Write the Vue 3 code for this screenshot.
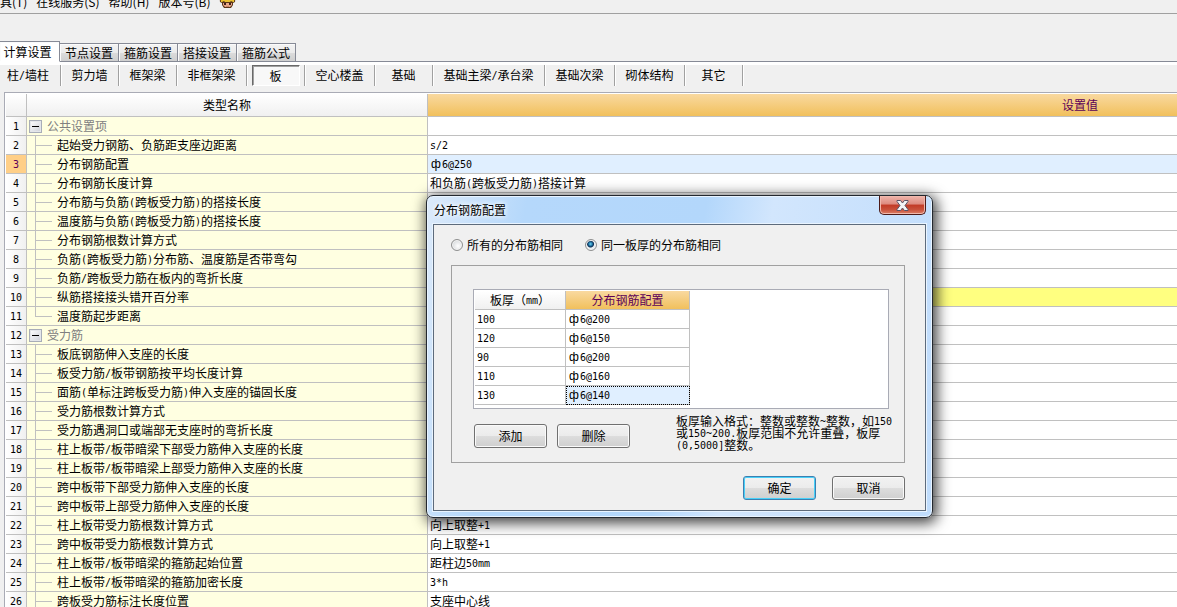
<script setup>
import { h } from 'vue'

const menus = ['具(T)', '在线服务(S)', '帮助(H)', '版本号(B)']
const tabs = ['计算设置', '节点设置', '箍筋设置', '搭接设置', '箍筋公式']
const parts = [
  { label: '柱/墙柱', size: 'w60' },
  { label: '剪力墙', size: 'w58' },
  { label: '框架梁', size: 'w58' },
  { label: '非框架梁', size: 'w70' },
  { label: '板', size: 'w58', active: true },
  { label: '空心楼盖', size: 'w70' },
  { label: '基础', size: 'w58' },
  { label: '基础主梁/承台梁', size: 'w112' },
  { label: '基础次梁', size: 'w70' },
  { label: '砌体结构', size: 'w70' },
  { label: '其它', size: 'w58' },
]

const rows = [
  { name: '公共设置项', group: true },
  { name: '起始受力钢筋、负筋距支座边距离', value: 's/2' },
  { name: '分布钢筋配置', value: 'ф6@250', selected: true },
  { name: '分布钢筋长度计算', value: '和负筋(跨板受力筋)搭接计算' },
  { name: '分布筋与负筋(跨板受力筋)的搭接长度' },
  { name: '温度筋与负筋(跨板受力筋)的搭接长度' },
  { name: '分布钢筋根数计算方式' },
  { name: '负筋(跨板受力筋)分布筋、温度筋是否带弯勾' },
  { name: '负筋/跨板受力筋在板内的弯折长度' },
  { name: '纵筋搭接接头错开百分率', changed: true },
  { name: '温度筋起步距离', last: true },
  { name: '受力筋', group: true },
  { name: '板底钢筋伸入支座的长度' },
  { name: '板受力筋/板带钢筋按平均长度计算' },
  { name: '面筋(单标注跨板受力筋)伸入支座的锚固长度' },
  { name: '受力筋根数计算方式' },
  { name: '受力筋遇洞口或端部无支座时的弯折长度' },
  { name: '柱上板带/板带暗梁下部受力筋伸入支座的长度' },
  { name: '柱上板带/板带暗梁上部受力筋伸入支座的长度' },
  { name: '跨中板带下部受力筋伸入支座的长度' },
  { name: '跨中板带上部受力筋伸入支座的长度' },
  { name: '柱上板带受力筋根数计算方式', value: '向上取整+1' },
  { name: '跨中板带受力筋根数计算方式', value: '向上取整+1' },
  { name: '柱上板带/板带暗梁的箍筋起始位置', value: '距柱边50mm' },
  { name: '柱上板带/板带暗梁的箍筋加密长度', value: '3*h' },
  { name: '跨板受力筋标注长度位置', value: '支座中心线' },
]

const bars = [
  ['100', 'ф6@200'],
  ['120', 'ф6@150'],
  ['90', 'ф6@200'],
  ['110', 'ф6@160'],
  ['130', 'ф6@140'],
]

// Sets half-width characters in a monospaced face, half an em of the Chinese text wide
const Mixed = (props) =>
  h(
    'span',
    { class: 'mixed' },
    (props.text.match(/ф|[\x21-\x7e]+|[^\x21-\x7eф]+/g) || []).map((run) => {
      if (run === 'ф') return h('span', { class: 'dia' }, run)
      return /[\x21-\x7e]/.test(run) ? h('span', { class: 'half' }, run) : run
    })
  )
Mixed.props = ['text']
</script>

<template>
  <div class="app">
    <nav class="menubar">
      <button v-for="m in menus" :key="m" type="button">{{ m }}</button>
      <svg class="face" viewBox="0 0 17 16" aria-hidden="true">
        <path d="M1 10C0 4 4 0 8.500 0S17 4 16 10l-2 1v2l-2 3H5l-2-3v-2z" fill="#5a3418" />
        <path d="M4 10h9v3l-2 2H6l-2-2z" fill="#e8a888" />
        <path d="M2 10C1 4 5 1 8.500 1S16 4 15 10l-1 0-2-1-1 1H6L5 9l-2 1z" fill="#e8c030" />
        <path d="M4 10h9v1H4z" fill="#5a3418" />
        <path d="M5 11h2v2H5zM10 11h2v2h-2z" fill="#40201c" />
        <path d="M7 14h3v1H7z" fill="#c88068" />
      </svg>
    </nav>

    <div class="tabs" role="tablist">
      <button v-for="(t, i) in tabs" :key="t" type="button" role="tab" :class="{ on: i === 0 }" :aria-selected="i === 0">{{ t }}</button>
      <span class="rest"></span>
    </div>

    <div class="parts">
      <div v-for="p in parts" :key="p.label" class="part" :class="p.size">
        <button type="button" :class="{ on: p.active }"><Mixed :text="p.label" /></button>
      </div>
    </div>

    <div class="sheet">
      <table class="grid">
        <colgroup><col class="c-num" /><col class="c-name" /><col class="c-val" /></colgroup>
        <thead>
          <tr><th></th><th>类型名称</th><th class="hot">设置值</th></tr>
        </thead>
        <tbody>
          <tr v-for="(r, i) in rows" :key="i" :class="{ selected: r.selected, changed: r.changed }">
            <td class="num"><span class="half">{{ i + 1 }}</span></td>
            <td class="name">
              <div class="cell" :class="{ group: r.group }">
                <button v-if="r.group" type="button" class="fold" aria-label="折叠"></button>
                <span v-else class="branch" :class="{ last: r.last }"></span>
                <Mixed :text="r.name" />
              </div>
            </td>
            <td class="value"><Mixed :text="r.value || ''" /></td>
          </tr>
        </tbody>
      </table>
    </div>

    <section class="dialog" role="dialog" aria-labelledby="dlg-title">
      <header>
        <h1 id="dlg-title">分布钢筋配置</h1>
        <button type="button" class="close" aria-label="关闭">
          <svg viewBox="0 0 13 11" aria-hidden="true">
            <path d="M1 .5h3.600L6.500 3 8.400.5H12v1L9 5.500l3 4v1H8.400L6.500 8l-1.900 2.500H1v-1l3-4-3-4z" fill="#f4f4f6" stroke="#5a5468" />
          </svg>
        </button>
      </header>
      <div class="client">
        <div class="choices">
          <label><input type="radio" name="scope" />所有的分布筋相同</label>
          <label><input type="radio" name="scope" checked />同一板厚的分布筋相同</label>
        </div>
        <div class="box">
          <div class="list">
            <table class="bars">
              <colgroup><col class="b-thick" /><col class="b-conf" /></colgroup>
              <thead>
                <tr><th><Mixed text="板厚（mm）" /></th><th class="hot">分布钢筋配置</th></tr>
              </thead>
              <tbody>
                <tr v-for="(b, i) in bars" :key="b[0]">
                  <td><Mixed :text="b[0]" /></td>
                  <td :class="{ focus: i === 4 }"><Mixed :text="b[1]" /></td>
                </tr>
              </tbody>
            </table>
          </div>
          <div class="below">
            <button type="button" class="btn">添加</button>
            <button type="button" class="btn">删除</button>
            <p>
              <Mixed text="板厚输入格式：整数或整数~整数，如150" /><br />
              <Mixed text="或150~200.板厚范围不允许重叠，板厚" /><br />
              <Mixed text="(0,5000]整数。" />
            </p>
          </div>
        </div>
        <div class="actions">
          <button type="button" class="btn primary">确定</button>
          <button type="button" class="btn">取消</button>
        </div>
      </div>
    </section>
  </div>
</template>

<style>
body {
  overflow: hidden;
}
.mixed {
  white-space: nowrap;
}
.half {
  font-family: "DejaVu Sans Mono", "Liberation Mono", monospace;
  font-size: 10px;
  line-height: 0;
  vertical-align: 1px;
}
.dia {
  display: inline-block;
  width: 12px;
  text-align: center;
  font-family: "Liberation Sans", Arial, sans-serif;
  font-size: 12px;
  line-height: 0;
  vertical-align: 1px;
}
</style>

<style scoped>
.app {
  position: relative;
  display: flex;
  flex-direction: column;
  height: 100vh;
  overflow: hidden;
  background: #f0f0f0;
  color: #000;
  font: 12px/18px "Noto Sans CJK SC", sans-serif;
}
button {
  margin: 0;
  padding: 0;
  border: 0;
  background: none;
  color: inherit;
  font: inherit;
}
table {
  table-layout: fixed;
  border-spacing: 0;
}
th,
td {
  box-sizing: border-box;
  padding: 0;
  border-right: 1px solid #c0c0c0;
  border-bottom: 1px solid #c0c0c0;
  font-weight: normal;
  white-space: nowrap;
}
th {
  background: linear-gradient(#fff, #f0f0f0);
}
th.hot {
  background: linear-gradient(#f9d9a0, #f1c05c);
  color: #5c0058;
}

.menubar {
  display: flex;
  flex: none;
  align-items: flex-end;
  gap: 9px;
  height: 13px;
  overflow: hidden;
  border-bottom: 1px solid #a0a0a0;
}
.menubar button {
  flex: none;
  padding-bottom: 2px;
}
.face {
  flex: none;
  width: 17px;
  height: 16px;
  margin-bottom: 5px;
}

.tabs {
  display: flex;
  flex: none;
  align-items: flex-end;
  margin-top: 27px;
}
.tabs button {
  box-sizing: border-box;
  flex: none;
  width: 59px;
  height: 19px;
  border: 1px solid #868a96;
  border-left: 0;
  background: linear-gradient(#f3f3f3, #ebebeb 50%, #dcdcdc 50%, #cfcfcf);
  box-shadow: inset 1px 1px #fbfbfb;
}
.tabs button.on {
  width: 60px;
  height: 21px;
  padding-right: 4px;
  border-bottom-color: #fff;
  background: #fff;
}
.tabs .rest {
  flex: 1;
  border-bottom: 1px solid #868a96;
}

.parts {
  display: flex;
  flex: none;
  height: 21px;
  border-top: 3px solid #fff;
}
.part {
  box-sizing: border-box;
  flex: none;
  display: flex;
  justify-content: center;
  border-right: 1px solid #a0a0a0;
  box-shadow: 1px 0 #fff;
}
.part button {
  padding-bottom: 2px;
}
.part button.on {
  width: 48px;
  padding: 0;
  border: 1px solid;
  border-color: #696969 #fff #fff #696969;
  background: #f8f8f8;
  box-shadow: inset 1px 1px #a0a0a0;
}
.w58 { width: 58px; }
.w60 { width: 61px; padding-right: 4px; }
.w70 { width: 70px; }
.w112 { width: 112px; }

.sheet {
  flex: 1;
  min-height: 0;
  margin: 6px 0 0 4px;
  padding: 1px 0 0 1px;
  overflow: hidden;
  border: solid #a9abb5;
  border-width: 1px 0 0 1px;
  background: #fff;
}
.grid {
  width: 1727px;
}
.c-num { width: 21px; }
.c-name { width: 401px; }
.grid th {
  height: 23px;
}
.grid td {
  height: 19px;
}
.num {
  background: linear-gradient(90deg, #fff, #f0f0f0);
  line-height: 16px;
  text-align: center;
}
.name {
  background: #ffffe1;
}
.cell {
  display: flex;
  align-items: center;
  gap: 5px;
  height: 18px;
  padding-left: 8px;
}
.cell.group {
  padding-left: 2px;
  color: #808080;
}
.branch {
  width: 17px;
  height: 18px;
  background:
    linear-gradient(#c0c0c0, #c0c0c0) 0 0 / 1px 100% no-repeat,
    linear-gradient(#c0c0c0, #c0c0c0) 0 9px / 100% 1px no-repeat;
}
.branch.last {
  background-size: 1px 9px, 100% 1px;
}
.fold {
  box-sizing: border-box;
  width: 13px;
  height: 13px;
  border: 1px solid #a8adb8;
  background:
    linear-gradient(#000, #000) center / 7px 1px no-repeat,
    linear-gradient(135deg, #fff, #cdd0d8);
  box-shadow: inset 0 0 0 1px #e4e6ea;
}
.value {
  padding-left: 2px;
  line-height: 16px;
}
.selected .num {
  background: #ffcf87;
  color: #5c0058;
}
.selected .value {
  background: #e0efff;
}
.changed .value {
  background: #ffff80;
}

.dialog {
  position: absolute;
  top: 195px;
  left: 426px;
  box-sizing: border-box;
  width: 507px;
  padding: 0 6px 6px;
  border: 1px solid #23282f;
  border-radius: 7px;
  background:
    linear-gradient(100deg, #dceafa 0, #b5d8fb 18%, #b3d7fb 50%, #d2e6fd 62%, #bfdcfc 100%);
  box-shadow: inset 0 0 0 1px #e9f4ff, 2px 3px 14px 2px rgba(0, 0, 0, 0.75);
}
.dialog header {
  display: flex;
  align-items: flex-start;
  justify-content: space-between;
  height: 28px;
}
.dialog h1 {
  margin: 0;
  padding: 5px 1px;
  font: inherit;
  text-shadow: 0 0 5px #fff, 0 0 5px #fff;
}
.close {
  box-sizing: border-box;
  display: flex;
  align-items: center;
  justify-content: center;
  width: 47px;
  height: 19px;
  border: 1px solid #4c1a18;
  border-top: 0;
  border-radius: 0 0 5px 5px;
  background: linear-gradient(#efb5ac, #dd8a7e 45%, #c23a26 50%, #c8503a 75%, #dc8068);
  box-shadow: inset 0 0 0 1px #f0b8ac;
}
.close svg {
  width: 13px;
  height: 11px;
}
.client {
  padding: 11px 20px 10px 17px;
  border: 1px solid #5d6b7c;
  background: #f0f0f0;
  box-shadow: 0 0 0 1px #e9f4ff;
}
.choices {
  display: flex;
  gap: 22px;
}
.choices label {
  display: flex;
  align-items: center;
  gap: 4px;
}
.choices input {
  appearance: none;
  box-sizing: border-box;
  width: 12px;
  height: 12px;
  margin: 0;
  border: 1px solid #8e8f8f;
  border-radius: 50%;
  background: radial-gradient(circle at 60% 60%, #fff, #c8ccd0);
  box-shadow: inset 0 0 0 1px #f4f4f4;
}
.choices input:checked {
  background: radial-gradient(circle at 45% 40%, #6fd8f8 0, #1c6c9c 2px, #0c2c50 3px, #e8eef2 4px);
}
.box {
  margin-top: 11px;
  padding: 23px 15px 11px 21px;
  border: 1px solid #a0a0a0;
}
.list {
  padding: 1px 1px 3px;
  border: 1px solid #a9abb5;
  background: #fff;
}
.bars {
  width: 215px;
}
.b-thick { width: 91px; }
.b-conf { width: 124px; }
.bars th,
.bars td {
  height: 19px;
  line-height: 16px;
}
.bars td {
  padding-left: 2px;
}
.bars td.focus {
  background: #e0efff;
  outline: 1px dotted #000;
  outline-offset: -1px;
}
.below {
  display: flex;
  align-items: flex-start;
  gap: 10px;
  margin-top: 6px;
  padding-left: 1px;
}
.below p {
  margin: 0 0 0 36px;
  line-height: 12px;
  white-space: nowrap;
}
.below .btn {
  margin-top: 9px;
}
.btn {
  box-sizing: border-box;
  flex: none;
  width: 73px;
  height: 24px;
  padding-bottom: 1px;
  border: 1px solid #707070;
  border-radius: 3px;
  background: linear-gradient(#f2f2f2, #ebebeb 50%, #dddddd 50%, #cfcfcf);
  box-shadow: inset 0 0 0 1px #fafafa;
}
.btn.primary {
  border-color: #3c7fb1;
  box-shadow: inset 0 0 0 1px #48d0f8;
}
.actions {
  display: flex;
  justify-content: flex-end;
  gap: 16px;
  margin-top: 13px;
}
</style>
